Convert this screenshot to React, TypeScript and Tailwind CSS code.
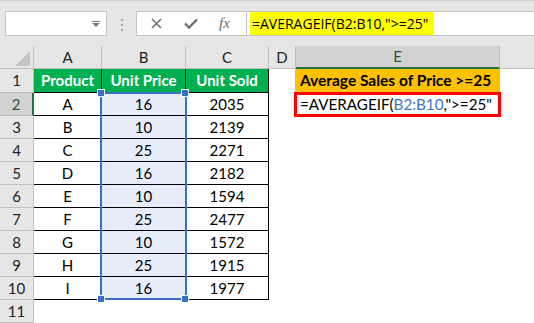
import React from 'react';

type Row = { n: number; a: string; b: string; c: string; kind?: 'head' | 'data' | 'empty' };

const rows: Row[] = [
  { n: 1, a: 'Product', b: 'Unit Price', c: 'Unit Sold', kind: 'head' },
  { n: 2, a: 'A', b: '16', c: '2035' },
  { n: 3, a: 'B', b: '10', c: '2139' },
  { n: 4, a: 'C', b: '25', c: '2271' },
  { n: 5, a: 'D', b: '16', c: '2182' },
  { n: 6, a: 'E', b: '10', c: '1594' },
  { n: 7, a: 'F', b: '25', c: '2477' },
  { n: 8, a: 'G', b: '10', c: '1572' },
  { n: 9, a: 'H', b: '25', c: '1915' },
  { n: 10, a: 'I', b: '16', c: '1977' },
  { n: 11, a: '', b: '', c: '', kind: 'empty' },
];

const FormulaBar: React.FC = () => (
  <div className="h-[46px] bg-[#e6e6e6] border-t border-[#d4d4d4] flex items-start pt-[10px]">
    {/* Name box */}
    <div className="ml-[5px] w-[102px] h-[25px] bg-white border border-[#c6c6c6] flex items-center justify-end pr-[6px]">
      <svg width="8" height="6" viewBox="0 0 8 6">
        <rect x="0" y="0" width="8" height="1" fill="#7a7a7a" />
        <path d="M0 2 L8 2 L4 6 Z" fill="#7a7a7a" />
      </svg>
    </div>
    <div className="ml-[14px] mt-[8px] flex flex-col gap-[3px]">
      <div className="w-[2px] h-[2px] bg-[#a3a3a3]" />
      <div className="w-[2px] h-[2px] bg-[#a3a3a3]" />
      <div className="w-[2px] h-[2px] bg-[#a3a3a3]" />
    </div>
    {/* Cancel / enter / fx */}
    <div className="ml-[13px] w-[111px] h-[25px] bg-white border border-[#c6c6c6] flex items-center">
      <svg className="ml-[14px]" width="11" height="11" viewBox="0 0 11 11">
        <path d="M1 1 L10 10 M10 1 L1 10" stroke="#707070" strokeWidth="1.6" />
      </svg>
      <svg className="ml-[22px]" width="14" height="11" viewBox="0 0 14 11">
        <path d="M1 5.5 L5 9.5 L13 1.5" stroke="#707070" strokeWidth="2.4" fill="none" />
      </svg>
      <span className="ml-[21px] font-['Liberation_Serif'] italic text-[15px] leading-none text-[#6a6a6a]">fx</span>
    </div>
    {/* Formula input */}
    <div className="flex-1 h-[25px] bg-white border-y border-[#c6c6c6] flex items-center pl-[3px]">
      <span className="bg-[#ffff00] h-[23px] pl-[2px] pr-[6px] flex items-center font-['Open_Sans'] text-[14px] text-black whitespace-nowrap">
        =AVERAGEIF(B2:B10,"&gt;=25"
      </span>
    </div>
  </div>
);

const ColumnHeader: React.FC = () => {
  const cols = [
    { l: 'A', w: 'w-[68px]' },
    { l: 'B', w: 'w-[84px]' },
    { l: 'C', w: 'w-[83px]' },
    { l: 'D', w: 'w-[27px]' },
  ];
  return (
    <div className="flex h-[23px] bg-[#e6e6e6] text-[15px] text-[#222]">
      <div className="w-[34px] border-r border-b border-[#bfbfbf] flex items-end justify-end pr-[3px] pb-[2px]">
        <svg width="15" height="15" viewBox="0 0 15 15">
          <path d="M15 0 L15 15 L0 15 Z" fill="#c3c3c3" />
        </svg>
      </div>
      {cols.map((c) => (
        <div key={c.l} className={`${c.w} border-r border-b border-[#bfbfbf] flex items-center justify-center`}>
          {c.l}
        </div>
      ))}
      <div className="w-[204px] bg-[#d2d2d2] border-r border-[#bfbfbf] border-b-2 border-b-[#217346] flex items-center justify-center text-[#1d5c40]">
        E
      </div>
      <div className="flex-1 border-b border-[#bfbfbf]" />
    </div>
  );
};

const SheetRow: React.FC<{ row: Row }> = ({ row }) => {
  const isHead = row.kind === 'head';
  const isEmpty = row.kind === 'empty';
  const selected = row.n === 2;
  const h = row.n === 1 ? 'h-[24px]' : 'h-[23px]';
  const cell = isEmpty
    ? 'flex items-center justify-center'
    : isHead
    ? 'flex items-center justify-center border-r border-b border-black bg-[#00b050] text-white font-bold'
    : 'flex items-center justify-center border-r border-b border-black';

  return (
    <div className={`flex ${h} text-[15px]`}>
      <div
        className={
          selected
            ? 'w-[34px] bg-[#d2d2d2] border-b border-[#bfbfbf] border-r-2 border-r-[#217346] flex items-center justify-center text-[#1d5c40]'
            : 'w-[34px] bg-[#e6e6e6] border-r border-b border-[#bfbfbf] flex items-center justify-center text-[#222]'
        }
      >
        {row.n}
      </div>
      <div className={`w-[68px] ${cell}`}>{row.a}</div>
      <div className={`w-[84px] ${cell} ${!isHead && !isEmpty ? 'bg-[#e7edf8]' : ''}`}>{row.b}</div>
      <div className={`w-[83px] ${cell}`}>{row.c}</div>
      <div className="w-[26px]" />
      {row.n === 1 && (
        <div className="w-[205px] bg-[#ffc000] flex items-center pl-[5px] text-[15.5px] font-bold text-black whitespace-nowrap">
          Average Sales of Price &gt;=25
        </div>
      )}
      {row.n === 2 && (
        <div className="w-[205px] flex items-center pl-[5px] text-[15.2px] text-black whitespace-nowrap outline-[3px] outline-solid outline-[#ff0000] -outline-offset-2">
          =AVERAGEIF(<span className="text-[#3f74c8]">B2:B10</span>,"&gt;=25"
        </div>
      )}
    </div>
  );
};

const Corner: React.FC<{ className: string }> = ({ className }) => (
  <div className={`absolute w-[6px] h-[6px] bg-[#3a6fc6] outline outline-white ${className}`} />
);

const App: React.FC = () => {
  return (
    <div className="w-[534px] h-[323px] bg-white overflow-hidden font-['Lato',sans-serif] text-black">
      <FormulaBar />
      <ColumnHeader />
      <div className="relative">
        {rows.map((r) => (
          <SheetRow key={r.n} row={r} />
        ))}
        {/* reference highlight on B2:B10 */}
        <div className="absolute left-[100px] top-[23px] w-[87px] h-[208px] border-2 border-[#3a6fc6] pointer-events-none" />
        <Corner className="left-[98px] top-[21px]" />
        <Corner className="left-[182px] top-[21px]" />
        <Corner className="left-[98px] top-[227px]" />
        <Corner className="left-[182px] top-[227px]" />
      </div>
    </div>
  );
};

export default App;
